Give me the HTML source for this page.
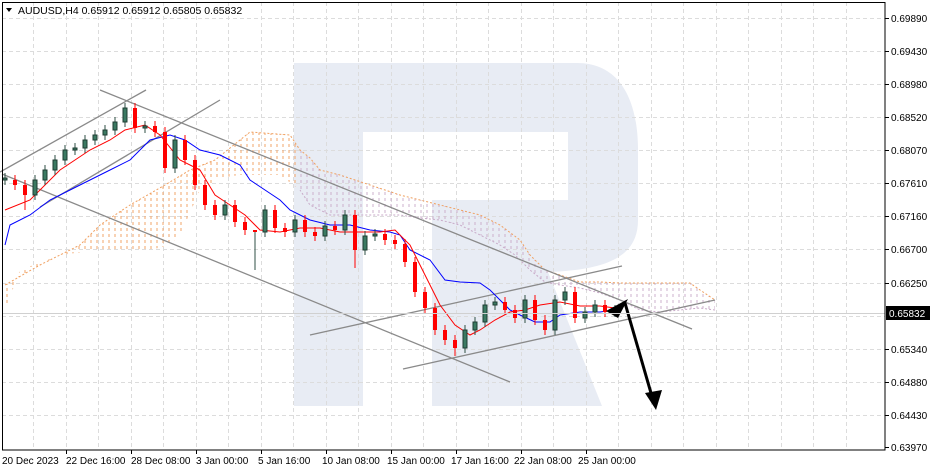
<!DOCTYPE html>
<html><head><meta charset="utf-8"><style>
html,body{margin:0;padding:0;background:#fff;width:931px;height:471px;overflow:hidden}
svg text{font-family:"Liberation Sans","DejaVu Sans",sans-serif;font-size:10px;fill:#000}
</style></head><body>
<svg width="931" height="471" viewBox="0 0 931 471" xmlns="http://www.w3.org/2000/svg">
<defs>
<pattern id="po" width="6" height="6" patternUnits="userSpaceOnUse"><line x1="1" y1="0" x2="1" y2="3" stroke="#f2a468" stroke-width="1"/></pattern>
<pattern id="pp" width="6" height="6" patternUnits="userSpaceOnUse"><line x1="1" y1="0" x2="1" y2="3" stroke="#cdb0cd" stroke-width="1"/></pattern>
<clipPath id="cl"><rect x="0" y="0" width="300" height="450"/></clipPath>
<clipPath id="cr"><rect x="300" y="0" width="600" height="450"/></clipPath>
</defs>
<path d="M294,63 H577 C620,63 638,100 638,150 V220 C638,255 610,270 548,272 L602,406 H432 V200 H363 V406 H294 Z" fill="#e8ecf4"/>
<rect x="363" y="132" width="205" height="68" fill="#fff"/>
<g stroke="#dcdcdc" stroke-dasharray="4,3" stroke-width="1">
<line x1="2" y1="18.5" x2="885" y2="18.5"/><line x1="2" y1="51.5" x2="885" y2="51.5"/><line x1="2" y1="84.5" x2="885" y2="84.5"/><line x1="2" y1="117.5" x2="885" y2="117.5"/><line x1="2" y1="150.5" x2="885" y2="150.5"/><line x1="2" y1="183.5" x2="885" y2="183.5"/><line x1="2" y1="216.5" x2="885" y2="216.5"/><line x1="2" y1="249.5" x2="885" y2="249.5"/><line x1="2" y1="283.5" x2="885" y2="283.5"/><line x1="2" y1="316.5" x2="885" y2="316.5"/><line x1="2" y1="349.5" x2="885" y2="349.5"/><line x1="2" y1="382.5" x2="885" y2="382.5"/><line x1="2" y1="415.5" x2="885" y2="415.5"/>
<line x1="33.5" y1="2" x2="33.5" y2="450"/><line x1="66.5" y1="2" x2="66.5" y2="450"/><line x1="98.5" y1="2" x2="98.5" y2="450"/><line x1="131.5" y1="2" x2="131.5" y2="450"/><line x1="163.5" y1="2" x2="163.5" y2="450"/><line x1="196.5" y1="2" x2="196.5" y2="450"/><line x1="228.5" y1="2" x2="228.5" y2="450"/><line x1="261.5" y1="2" x2="261.5" y2="450"/><line x1="293.5" y1="2" x2="293.5" y2="450"/><line x1="326.5" y1="2" x2="326.5" y2="450"/><line x1="358.5" y1="2" x2="358.5" y2="450"/><line x1="391.5" y1="2" x2="391.5" y2="450"/><line x1="423.5" y1="2" x2="423.5" y2="450"/><line x1="456.5" y1="2" x2="456.5" y2="450"/><line x1="488.5" y1="2" x2="488.5" y2="450"/><line x1="521.5" y1="2" x2="521.5" y2="450"/><line x1="553.5" y1="2" x2="553.5" y2="450"/><line x1="586.5" y1="2" x2="586.5" y2="450"/><line x1="618.5" y1="2" x2="618.5" y2="450"/><line x1="651.5" y1="2" x2="651.5" y2="450"/><line x1="683.5" y1="2" x2="683.5" y2="450"/><line x1="716.5" y1="2" x2="716.5" y2="450"/><line x1="748.5" y1="2" x2="748.5" y2="450"/><line x1="781.5" y1="2" x2="781.5" y2="450"/><line x1="813.5" y1="2" x2="813.5" y2="450"/><line x1="846.5" y1="2" x2="846.5" y2="450"/>
</g>
<g>
<polygon points="5,285 40,265 80,245 100,225 130,205 165,185 190,170 215,160 240,140 250,132 290,135 300,150 310,158 320,170 340,175 370,185 400,195 420,200 440,205 460,210 480,215 500,225 520,240 530,255 545,270 560,275 580,282 600,282 620,283 660,283 690,283 700,290 715,300 715,310 700,308 660,312 640,310 620,300 600,293 580,288 560,285 545,282 530,270 515,255 500,245 480,235 460,225 440,220 420,218 400,215 370,215 350,215 330,215 310,205 300,190 280,175 260,175 240,175 220,178 200,190 180,235 170,245 150,250 100,250 60,255 20,270 5,310" fill="url(#po)" clip-path="url(#cl)"/>
<polygon points="5,285 40,265 80,245 100,225 130,205 165,185 190,170 215,160 240,140 250,132 290,135 300,150 310,158 320,170 340,175 370,185 400,195 420,200 440,205 460,210 480,215 500,225 520,240 530,255 545,270 560,275 580,282 600,282 620,283 660,283 690,283 700,290 715,300 715,310 700,308 660,312 640,310 620,300 600,293 580,288 560,285 545,282 530,270 515,255 500,245 480,235 460,225 440,220 420,218 400,215 370,215 350,215 330,215 310,205 300,190 280,175 260,175 240,175 220,178 200,190 180,235 170,245 150,250 100,250 60,255 20,270 5,310" fill="url(#pp)" clip-path="url(#cr)"/>
<polyline points="5,285 40,265 80,245 100,225 130,205 165,185 190,170 215,160 240,140 250,132 290,135 300,150 310,158 320,170 340,175 370,185 400,195 420,200 440,205 460,210 480,215 500,225 520,240 530,255 545,270 560,275 580,282 600,282 620,283 660,283 690,283 700,290 715,300" fill="none" stroke="#f0a060" stroke-dasharray="2,2"/>
<polyline points="715,310 700,308 660,312 640,310 620,300 600,293 580,288 560,285 545,282 530,270 515,255 500,245 480,235 460,225 440,220 420,218 400,215 370,215 350,215 330,215 310,205 300,190" fill="none" stroke="#c8aac8" stroke-dasharray="2,2"/>
</g>
<g stroke="#8a8a8a" stroke-width="1.3">
<line x1="0" y1="172" x2="146" y2="90"/>
<line x1="40" y1="207" x2="220" y2="100"/>
<line x1="100" y1="90" x2="692" y2="329"/>
<line x1="2" y1="174" x2="510" y2="382"/>
<line x1="310" y1="335" x2="622" y2="266"/>
<line x1="403" y1="369" x2="715" y2="300"/>
</g>
<polyline fill="none" stroke="#0000ff" stroke-width="1" points="5,245 10,225 30,215 50,200 70,190 90,180 110,170 130,160 150,140 170,135 185,140 200,150 220,155 240,165 250,180 265,190 280,200 290,210 310,220 330,225 350,225 370,230 390,232 400,235 410,250 430,260 445,280 460,282 480,283 490,290 500,300 510,310 520,315 535,322 550,322 560,315 580,312 600,312 615,310"/>
<polyline fill="none" stroke="#ff0000" stroke-width="1" points="5,210 30,200 60,170 90,150 110,140 125,130 145,125 160,135 180,160 200,170 215,195 230,205 245,215 260,230 280,232 300,228 320,228 340,232 360,232 380,232 395,230 410,245 425,275 440,305 455,325 470,335 480,330 495,320 510,312 525,310 540,305 560,302 580,306 600,306 615,308"/>
<g stroke-width="1">
<g stroke="#2f4f45"><line x1="5" y1="173" x2="5" y2="185"/><line x1="35" y1="175" x2="35" y2="200"/><line x1="45" y1="165" x2="45" y2="185"/><line x1="55" y1="155" x2="55" y2="175"/><line x1="65" y1="145" x2="65" y2="165"/><line x1="75" y1="143" x2="75" y2="155"/><line x1="85" y1="135" x2="85" y2="153"/><line x1="95" y1="130" x2="95" y2="145"/><line x1="105" y1="125" x2="105" y2="140"/><line x1="115" y1="117" x2="115" y2="135"/><line x1="125" y1="103" x2="125" y2="127"/><line x1="145" y1="121" x2="145" y2="133"/><line x1="175" y1="135" x2="175" y2="173"/><line x1="225" y1="200" x2="225" y2="220"/><line x1="265" y1="205" x2="265" y2="237"/><line x1="295" y1="215" x2="295" y2="237"/><line x1="325" y1="221" x2="325" y2="241"/><line x1="345" y1="210" x2="345" y2="235"/><line x1="365" y1="231" x2="365" y2="255"/><line x1="375" y1="229" x2="375" y2="241"/><line x1="465" y1="325" x2="465" y2="353"/><line x1="475" y1="317" x2="475" y2="335"/><line x1="485" y1="300" x2="485" y2="327"/><line x1="495" y1="297" x2="495" y2="310"/><line x1="525" y1="295" x2="525" y2="323"/><line x1="555" y1="295" x2="555" y2="335"/><line x1="565" y1="287" x2="565" y2="305"/><line x1="585" y1="307" x2="585" y2="323"/><line x1="595" y1="300" x2="595" y2="317"/><line x1="615" y1="305" x2="615" y2="317"/><line x1="255" y1="230" x2="255" y2="270"/></g>
<g stroke="#ff0000"><line x1="15" y1="175" x2="15" y2="190"/><line x1="25" y1="180" x2="25" y2="210"/><line x1="135" y1="103" x2="135" y2="133"/><line x1="155" y1="121" x2="155" y2="137"/><line x1="165" y1="127" x2="165" y2="173"/><line x1="185" y1="135" x2="185" y2="165"/><line x1="195" y1="155" x2="195" y2="190"/><line x1="205" y1="180" x2="205" y2="210"/><line x1="215" y1="200" x2="215" y2="220"/><line x1="235" y1="200" x2="235" y2="227"/><line x1="245" y1="217" x2="245" y2="235"/><line x1="275" y1="205" x2="275" y2="233"/><line x1="285" y1="223" x2="285" y2="237"/><line x1="305" y1="215" x2="305" y2="237"/><line x1="315" y1="227" x2="315" y2="241"/><line x1="335" y1="221" x2="335" y2="235"/><line x1="355" y1="210" x2="355" y2="268"/><line x1="385" y1="229" x2="385" y2="245"/><line x1="395" y1="235" x2="395" y2="249"/><line x1="405" y1="239" x2="405" y2="267"/><line x1="415" y1="257" x2="415" y2="297"/><line x1="425" y1="287" x2="425" y2="313"/><line x1="435" y1="303" x2="435" y2="335"/><line x1="445" y1="325" x2="445" y2="345"/><line x1="455" y1="335" x2="455" y2="356"/><line x1="505" y1="297" x2="505" y2="315"/><line x1="515" y1="305" x2="515" y2="323"/><line x1="535" y1="295" x2="535" y2="325"/><line x1="545" y1="315" x2="545" y2="335"/><line x1="575" y1="287" x2="575" y2="323"/><line x1="605" y1="300" x2="605" y2="317"/></g>
<g fill="#3b7a62" stroke="#1e3c32">
<rect x="3" y="178" width="4" height="2"/><rect x="33" y="180" width="4" height="15"/><rect x="43" y="170" width="4" height="10"/><rect x="53" y="160" width="4" height="10"/><rect x="63" y="150" width="4" height="10"/><rect x="73" y="148" width="4" height="2"/><rect x="83" y="140" width="4" height="8"/><rect x="93" y="135" width="4" height="5"/><rect x="103" y="130" width="4" height="5"/><rect x="113" y="122" width="4" height="8"/><rect x="123" y="108" width="4" height="14"/><rect x="143" y="126" width="4" height="2"/><rect x="173" y="140" width="4" height="28"/><rect x="223" y="205" width="4" height="10"/><rect x="263" y="210" width="4" height="22"/><rect x="293" y="220" width="4" height="12"/><rect x="323" y="226" width="4" height="10"/><rect x="343" y="215" width="4" height="15"/><rect x="363" y="236" width="4" height="14"/><rect x="373" y="234" width="4" height="2"/><rect x="463" y="330" width="4" height="18"/><rect x="473" y="322" width="4" height="8"/><rect x="483" y="305" width="4" height="17"/><rect x="493" y="302" width="4" height="3"/><rect x="523" y="300" width="4" height="18"/><rect x="553" y="300" width="4" height="30"/><rect x="563" y="292" width="4" height="8"/><rect x="583" y="312" width="4" height="6"/><rect x="593" y="305" width="4" height="7"/><rect x="613" y="310" width="4" height="2"/>
</g>
<g fill="#ff0000">
<rect x="13" y="180" width="4" height="5"/><rect x="23" y="185" width="4" height="10"/><rect x="133" y="108" width="4" height="20"/><rect x="153" y="126" width="4" height="6"/><rect x="163" y="132" width="4" height="36"/><rect x="183" y="140" width="4" height="20"/><rect x="193" y="160" width="4" height="25"/><rect x="203" y="185" width="4" height="20"/><rect x="213" y="205" width="4" height="10"/><rect x="233" y="205" width="4" height="17"/><rect x="243" y="222" width="4" height="8"/><rect x="253" y="230" width="4" height="2"/><rect x="273" y="210" width="4" height="18"/><rect x="283" y="228" width="4" height="4"/><rect x="303" y="220" width="4" height="12"/><rect x="313" y="232" width="4" height="4"/><rect x="333" y="226" width="4" height="4"/><rect x="353" y="215" width="4" height="35"/><rect x="383" y="234" width="4" height="6"/><rect x="393" y="240" width="4" height="4"/><rect x="403" y="244" width="4" height="18"/><rect x="413" y="262" width="4" height="30"/><rect x="423" y="292" width="4" height="16"/><rect x="433" y="308" width="4" height="22"/><rect x="443" y="330" width="4" height="10"/><rect x="453" y="340" width="4" height="8"/><rect x="503" y="302" width="4" height="8"/><rect x="513" y="310" width="4" height="8"/><rect x="533" y="300" width="4" height="20"/><rect x="543" y="320" width="4" height="10"/><rect x="573" y="292" width="4" height="26"/><rect x="603" y="305" width="4" height="7"/>
</g>
</g>
<line x1="625" y1="303" x2="653" y2="400" stroke="#000" stroke-width="3"/>
<polygon points="645,393 662,390 656,410" fill="#000"/>
<polygon points="606,311 628,299 618,318" fill="#000"/>
<line x1="2" y1="313.5" x2="885" y2="313.5" stroke="#d0d0d0"/>
<rect x="2.5" y="2.5" width="882.5" height="447.5" fill="none" stroke="#000" stroke-width="1"/>
<g stroke="#000"><line x1="885" y1="18.5" x2="889" y2="18.5"/><line x1="885" y1="51.5" x2="889" y2="51.5"/><line x1="885" y1="84.5" x2="889" y2="84.5"/><line x1="885" y1="117.5" x2="889" y2="117.5"/><line x1="885" y1="150.5" x2="889" y2="150.5"/><line x1="885" y1="183.5" x2="889" y2="183.5"/><line x1="885" y1="216.5" x2="889" y2="216.5"/><line x1="885" y1="249.5" x2="889" y2="249.5"/><line x1="885" y1="283.5" x2="889" y2="283.5"/><line x1="885" y1="349.5" x2="889" y2="349.5"/><line x1="885" y1="382.5" x2="889" y2="382.5"/><line x1="885" y1="415.5" x2="889" y2="415.5"/><line x1="885" y1="447.5" x2="889" y2="447.5"/></g>
<g>
<text x="891" y="22">0.69890</text><text x="891" y="55">0.69430</text><text x="891" y="88">0.68980</text><text x="891" y="121">0.68520</text><text x="891" y="154">0.68070</text><text x="891" y="187">0.67610</text><text x="891" y="220">0.67160</text><text x="891" y="253">0.66700</text><text x="891" y="287">0.66250</text><text x="891" y="353">0.65340</text><text x="891" y="386">0.64880</text><text x="891" y="419">0.64430</text><text x="891" y="451">0.63970</text>
</g>
<rect x="886" y="306" width="44" height="14" fill="#000"/>
<text x="889" y="317" style="fill:#fff">0.65832</text>
<g stroke="#000"><line x1="66.5" y1="450" x2="66.5" y2="454"/><line x1="131.5" y1="450" x2="131.5" y2="454"/><line x1="196.5" y1="450" x2="196.5" y2="454"/><line x1="261.5" y1="450" x2="261.5" y2="454"/><line x1="326.5" y1="450" x2="326.5" y2="454"/><line x1="391.5" y1="450" x2="391.5" y2="454"/><line x1="456.5" y1="450" x2="456.5" y2="454"/><line x1="521.5" y1="450" x2="521.5" y2="454"/><line x1="586.5" y1="450" x2="586.5" y2="454"/></g>
<g>
<text x="2" y="464">20 Dec 2023</text><text x="66" y="464">22 Dec 16:00</text><text x="131" y="464">28 Dec 08:00</text><text x="196" y="464">3 Jan 00:00</text><text x="258" y="464">5 Jan 16:00</text><text x="322" y="464">10 Jan 08:00</text><text x="387" y="464">15 Jan 00:00</text><text x="451" y="464">17 Jan 16:00</text><text x="514" y="464">22 Jan 08:00</text><text x="578" y="464">25 Jan 00:00</text>
</g>
<polygon points="6,8 12,8 9,12" fill="#000"/>
<text x="18" y="14" style="font-size:10.5px">AUDUSD,H4  0.65912 0.65912 0.65805 0.65832</text>
</svg>
</body></html>
